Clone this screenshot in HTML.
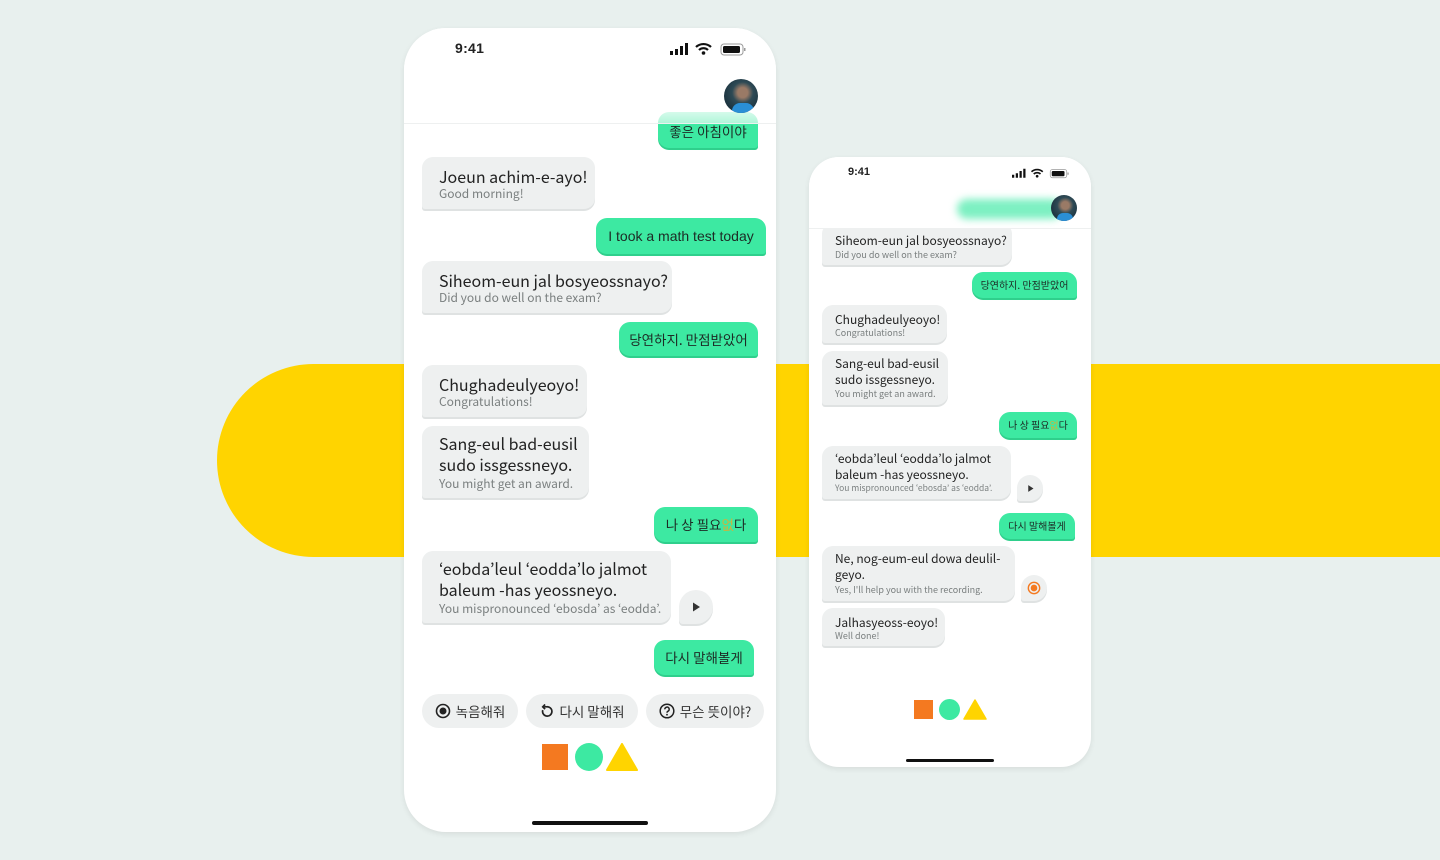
<!DOCTYPE html>
<html><head><meta charset="utf-8">
<style>
*{margin:0;padding:0;box-sizing:border-box}
body{width:1440px;height:860px;background:#e8f0ee;position:relative;overflow:hidden;font-family:"Liberation Sans","Noto Sans CJK KR",sans-serif;color:#222}
.band{position:absolute;left:217px;top:364px;width:1223px;height:193px;background:#ffd400;border-radius:97px 0 0 97px}
.phone{position:absolute;background:#fff;overflow:hidden;box-shadow:0 2px 6px rgba(0,0,0,.08)}
.a{position:absolute}
.g{position:absolute;background:#eef0f0;border-radius:11px 11px 11px 3px;box-shadow:0 2px 0 #dfe2e2;font-family:"Noto Sans CJK KR","Liberation Sans",sans-serif}
.gr{position:absolute;background:#3de9a2;border-radius:11px 11px 3px 11px;box-shadow:0 2px 0 #2fcf8c;font-family:"Noto Sans CJK KR",sans-serif;color:#1d2b25;text-align:center}
.t{color:#222}
.s{color:#7a7f7f}
.chip{position:absolute;top:666px;height:34px;border-radius:17px;background:#eef0f0;font-family:"Noto Sans CJK KR",sans-serif;font-size:13.5px;line-height:34px;color:#333;display:flex;align-items:center;justify-content:center;gap:5px}
.circ{position:absolute;border-radius:50%;background:#eef0f0;box-shadow:0 2px 0 #dfe2e2;display:flex;align-items:center;justify-content:center}
</style></head><body>
<div class="band"></div>

<!-- LEFT PHONE -->
<div class="phone" style="left:404px;top:28px;width:372px;height:804px;border-radius:42px">
  <div class="gr" style="left:254px;top:84px;width:100px;height:36px;font-size:13.5px;line-height:38px">좋은 아침이야</div>
  <div class="a" style="left:0;top:0;width:372px;height:96px;background:linear-gradient(#fff 0,#fff 75%,rgba(255,255,255,.6) 100%);border-bottom:1px solid #eef0f0"></div>
  <div class="a" style="left:51px;top:12px;font-size:14px;font-weight:bold;letter-spacing:.3px">9:41</div>
  <svg class="a" style="left:266px;top:14px" width="80" height="16" viewBox="0 0 80 16">
    <rect x="0" y="9" width="3" height="4" fill="#111"/><rect x="5" y="7" width="3" height="6" fill="#111"/><rect x="10" y="4" width="3" height="9" fill="#111"/><rect x="15" y="1" width="3" height="12" fill="#111"/>
    <path d="M26 5a11 11 0 0 1 15 0M29 8a6.5 6.5 0 0 1 9 0" stroke="#111" stroke-width="2.2" fill="none"/><circle cx="33.5" cy="11" r="1.8" fill="#111"/>
    <rect x="51" y="2" width="22" height="11" rx="3" fill="none" stroke="#999"/><rect x="53" y="4" width="17" height="7" rx="1.5" fill="#111"/><rect x="74" y="6" width="1.5" height="3" fill="#999"/>
  </svg>
  <div class="a" style="left:320px;top:51px;width:34px;height:34px;border-radius:50%;background:radial-gradient(circle at 55% 40%,#9a7a66 0 18%,#2e4a55 38%,#1d3440 70%);overflow:hidden"><div style="position:absolute;left:8px;top:24px;width:22px;height:12px;background:#2a8fd6;border-radius:8px 8px 0 0"></div></div>

  <div class="g" style="left:18px;top:129px;width:173px;height:52px"><div class="a t" style="left:17px;top:7px;font-size:16px">Joeun achim-e-ayo!</div><div class="a s" style="left:17px;top:28px;font-size:12px">Good morning!</div></div>
  <div class="gr" style="left:192px;top:190px;width:170px;height:36px;font-size:14px;line-height:36px;font-family:'Liberation Sans',sans-serif">I took a math test today</div>
  <div class="g" style="left:18px;top:233px;width:250px;height:52px"><div class="a t" style="left:17px;top:7px;font-size:16px">Siheom-eun jal bosyeossnayo?</div><div class="a s" style="left:17px;top:28px;font-size:12px">Did you do well on the exam?</div></div>
  <div class="gr" style="left:215px;top:294px;width:139px;height:34px;font-size:13.5px;line-height:34px">당연하지. 만점받았어</div>
  <div class="g" style="left:18px;top:337px;width:165px;height:52px"><div class="a t" style="left:17px;top:7px;font-size:16px">Chughadeulyeoyo!</div><div class="a s" style="left:17px;top:28px;font-size:12px">Congratulations!</div></div>
  <div class="g" style="left:18px;top:398px;width:167px;height:72px"><div class="a t" style="left:17px;top:7px;font-size:16px;line-height:21px">Sang-eul bad-eusil<br>sudo issgessneyo.</div><div class="a s" style="left:17px;top:49px;font-size:12px">You might get an award.</div></div>
  <div class="gr" style="left:250px;top:479px;width:104px;height:35px;font-size:13.5px;line-height:35px">나 상 필요<span style="color:#c9b540">없</span>다</div>
  <div class="g" style="left:18px;top:523px;width:249px;height:72px"><div class="a t" style="left:17px;top:7px;font-size:16px;line-height:21px">‘eobda’leul ‘eodda’lo jalmot<br>baleum -has yeossneyo.</div><div class="a s" style="left:17px;top:49px;font-size:12px">You mispronounced ‘ebosda’ as ‘eodda’.</div></div>
  <div class="circ" style="left:275px;top:562px;width:34px;height:34px;border-radius:50% 50% 50% 4px"><svg width="12" height="12" viewBox="0 0 12 12"><path d="M3 1.5L10 6L3 10.5Z" fill="#333"/></svg></div>
  <div class="gr" style="left:250px;top:612px;width:100px;height:35px;font-size:13.5px;line-height:35px">다시 말해볼게</div>

  <div class="chip" style="left:18px;width:96px"><svg width="16" height="16" viewBox="0 0 16 16"><circle cx="8" cy="8" r="6.5" fill="none" stroke="#222" stroke-width="1.6"/><circle cx="8" cy="8" r="3.5" fill="#222"/></svg>녹음해줘</div>
  <div class="chip" style="left:122px;width:112px"><svg width="15" height="15" viewBox="0 0 16 16"><path d="M4 6.5A5 5 0 1 0 8 3H5.5" fill="none" stroke="#222" stroke-width="1.8"/><path d="M6.5 0.5L4 3L6.5 5.5" fill="none" stroke="#222" stroke-width="1.8"/></svg>다시 말해줘</div>
  <div class="chip" style="left:242px;width:118px"><svg width="16" height="16" viewBox="0 0 16 16"><circle cx="8" cy="8" r="6.8" fill="none" stroke="#222" stroke-width="1.5"/><path d="M5.8 6.3a2.2 2.2 0 1 1 3 2c-.6.3-.8.7-.8 1.4" fill="none" stroke="#222" stroke-width="1.5"/><circle cx="8" cy="11.7" r=".9" fill="#222"/></svg>무슨 뜻이야?</div>

  <div class="a" style="left:138px;top:716px;width:26px;height:26px;background:#f47920"></div>
  <div class="a" style="left:171px;top:715px;width:28px;height:28px;border-radius:50%;background:#3de9a2"></div>
  <svg class="a" style="left:202px;top:715px" width="32" height="28"><path d="M16 1L31 27H1Z" fill="#ffd400" stroke="#ffd400" stroke-linejoin="round" stroke-width="2"/></svg>
  <div class="a" style="left:128px;top:793px;width:116px;height:4px;border-radius:2px;background:#111"></div>
</div>

<!-- RIGHT PHONE -->
<div class="phone" style="left:809px;top:157px;width:282px;height:610px;border-radius:30px">
  <div class="g" style="left:13px;top:66px;width:190px;height:42px"><div class="a t" style="left:13px;top:9px;font-size:12px">Siheom-eun jal bosyeossnayo?</div><div class="a s" style="left:13px;top:25px;font-size:9px">Did you do well on the exam?</div></div>
  <div class="a" style="left:0;top:0;width:282px;height:72px;background:#fff;border-bottom:1px solid #eef0f0"></div>
  <div class="a" style="left:39px;top:9px;font-size:11px;font-weight:bold">9:41</div>
  <svg class="a" style="left:202px;top:11px" width="62" height="12" viewBox="0 0 80 16">
    <rect x="0" y="9" width="3" height="4" fill="#111"/><rect x="5" y="7" width="3" height="6" fill="#111"/><rect x="10" y="4" width="3" height="9" fill="#111"/><rect x="15" y="1" width="3" height="12" fill="#111"/>
    <path d="M26 5a11 11 0 0 1 15 0M29 8a6.5 6.5 0 0 1 9 0" stroke="#111" stroke-width="2.2" fill="none"/><circle cx="33.5" cy="11" r="1.8" fill="#111"/>
    <rect x="51" y="2" width="22" height="11" rx="3" fill="none" stroke="#999"/><rect x="53" y="4" width="17" height="7" rx="1.5" fill="#111"/><rect x="74" y="6" width="1.5" height="3" fill="#999"/>
  </svg>
  <div class="a" style="left:148px;top:42px;width:105px;height:20px;border-radius:10px;background:#7df0c2;filter:blur(4px)"></div>
  <div class="a" style="left:242px;top:38px;width:26px;height:26px;border-radius:50%;background:radial-gradient(circle at 55% 40%,#9a7a66 0 18%,#2e4a55 38%,#1d3440 70%);overflow:hidden"><div style="position:absolute;left:6px;top:18px;width:16px;height:9px;background:#2a8fd6;border-radius:6px 6px 0 0"></div></div>

  <div class="gr" style="left:163px;top:115px;width:105px;height:26px;font-size:10px;line-height:26px">당연하지. 만점받았어</div>
  <div class="g" style="left:13px;top:148px;width:125px;height:38px"><div class="a t" style="left:13px;top:6px;font-size:12px">Chughadeulyeoyo!</div><div class="a s" style="left:13px;top:21px;font-size:9px">Congratulations!</div></div>
  <div class="g" style="left:13px;top:194px;width:126px;height:54px"><div class="a t" style="left:13px;top:5px;font-size:12px;line-height:16px">Sang-eul bad-eusil<br>sudo issgessneyo.</div><div class="a s" style="left:13px;top:36px;font-size:9px">You might get an award.</div></div>
  <div class="gr" style="left:190px;top:255px;width:78px;height:26px;font-size:10px;line-height:26px">나 상 필요<span style="color:#c9b540">없</span>다</div>
  <div class="g" style="left:13px;top:289px;width:189px;height:53px"><div class="a t" style="left:13px;top:5px;font-size:12px;line-height:16px">‘eobda’leul ‘eodda’lo jalmot<br>baleum -has yeossneyo.</div><div class="a s" style="left:13px;top:36px;font-size:8.5px">You mispronounced ‘ebosda’ as ‘eodda’.</div></div>
  <div class="circ" style="left:208px;top:318px;width:26px;height:26px;border-radius:50% 50% 50% 3px"><svg width="9" height="9" viewBox="0 0 12 12"><path d="M3 1.5L10 6L3 10.5Z" fill="#333"/></svg></div>
  <div class="gr" style="left:190px;top:356px;width:76px;height:26px;font-size:10px;line-height:26px">다시 말해볼게</div>
  <div class="g" style="left:13px;top:389px;width:193px;height:55px"><div class="a t" style="left:13px;top:5px;font-size:12px;line-height:16px">Ne, nog-eum-eul dowa deulil-<br>geyo.</div><div class="a s" style="left:13px;top:37px;font-size:9px">Yes, I'll help you with the recording.</div></div>
  <div class="circ" style="left:212px;top:418px;width:26px;height:26px;border-radius:50% 50% 50% 3px"><svg width="14" height="14" viewBox="0 0 16 16"><circle cx="8" cy="8" r="6.5" fill="none" stroke="#f47920" stroke-width="1.6"/><circle cx="8" cy="8" r="3.8" fill="#f47920"/></svg></div>
  <div class="g" style="left:13px;top:451px;width:123px;height:38px"><div class="a t" style="left:13px;top:6px;font-size:12px">Jalhasyeoss-eoyo!</div><div class="a s" style="left:13px;top:21px;font-size:9px">Well done!</div></div>

  <div class="a" style="left:105px;top:543px;width:19px;height:19px;background:#f47920"></div>
  <div class="a" style="left:130px;top:542px;width:21px;height:21px;border-radius:50%;background:#3de9a2"></div>
  <svg class="a" style="left:154px;top:542px" width="24" height="21"><path d="M12 1L23 20H1Z" fill="#ffd400" stroke="#ffd400" stroke-linejoin="round" stroke-width="1.5"/></svg>
  <div class="a" style="left:97px;top:602px;width:88px;height:3px;border-radius:2px;background:#111"></div>
</div>
</body></html>
